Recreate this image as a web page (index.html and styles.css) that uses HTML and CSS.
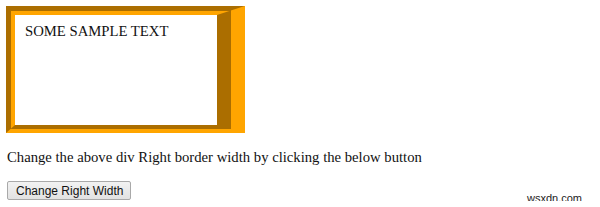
FILE: index.html
```html
<!DOCTYPE html>
<html>
<head>
<meta charset="utf-8">
<link rel="stylesheet" href="styles.css">
</head>
<body>
<div class="box">SOME SAMPLE TEXT</div>
<p class="note">Change the above div Right border width by clicking the below button</p>
<button class="btn" type="button">Change Right Width</button>
<div class="mark">wsxdn.com</div>
</body>
</html>
```
FILE: styles.css
```css
html, body {
  background: #ffffff;
}
body {
  margin: 6px;
  font-family: "Liberation Serif", "Times New Roman", serif;
  font-size: 14.7px;
  line-height: 17px;
  color: #111111;
  position: relative;
  height: 195px;
}
.box {
  box-sizing: border-box;
  width: 239px;
  height: 127px;
  border-style: groove;
  border-color: #ffa500;
  border-width: 9px 28px 8px 9px;
  padding: 8px 10px;
  background: #ffffff;
}
.note {
  margin: 16px 0 15px 1px;
}
.btn {
  display: block;
  margin: 0 0 0 1px;
  height: 19px;
  padding: 0 7px 0 8px;
  font-family: "Liberation Sans", Arial, sans-serif;
  font-size: 12px;
  color: #111111;
  background: linear-gradient(#f2f2f2, #e2e2e2);
  border: 1px solid #a9a9a9;
  border-radius: 2px;
}
.mark {
  position: absolute;
  left: 521px;
  top: 184px;
  font-family: "Liberation Sans", Arial, sans-serif;
  font-size: 11px;
  color: #222222;
}
```
